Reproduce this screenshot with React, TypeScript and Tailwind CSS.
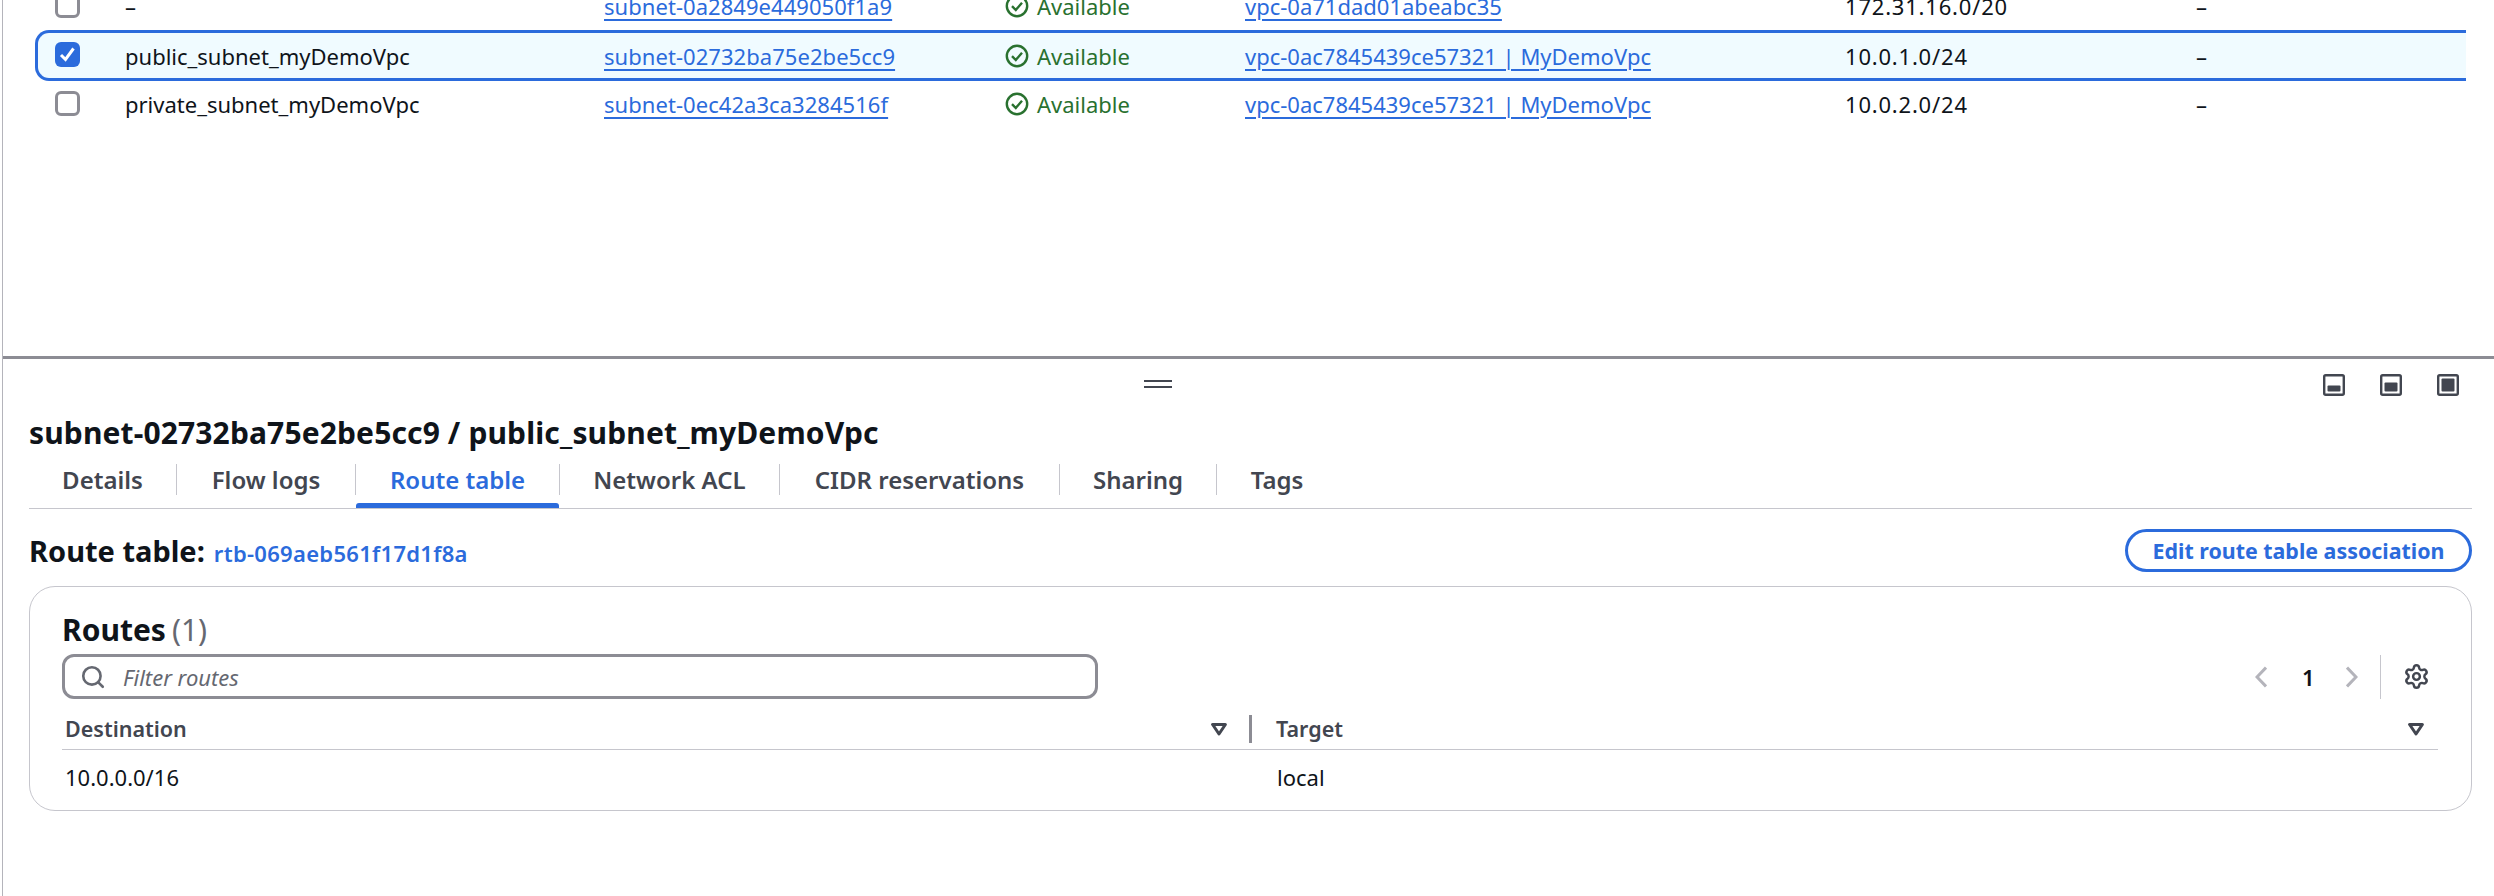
import type { ReactNode } from "react";
import { Search, Settings } from "lucide-react";

function Checkbox({ checked }: { checked?: boolean }) {
  if (checked) {
    return (
      <span className="-mt-[3px] flex h-[25px] w-[25px] shrink-0 items-center justify-center rounded-[6px] bg-[#2b6bdc]">
        <svg width="25" height="25" viewBox="0 0 25 25" fill="none">
          <path d="M6 13 L10.5 17.5 L18.5 6.5" stroke="#fff" strokeWidth="3" />
        </svg>
      </span>
    );
  }
  return <span className="-mt-[1px] block h-[25px] w-[25px] shrink-0 rounded-[6px] border-[3px] border-[#8c8c94] bg-white" />;
}

function Available() {
  return (
    <span className="flex items-center gap-[8px] text-[#29712f]">
      <svg width="24" height="24" viewBox="0 0 24 24" fill="none">
        <circle cx="12" cy="12" r="10.2" stroke="#29712f" strokeWidth="2.4" />
        <path d="M7 12.2 L10.8 16 L17 8.8" stroke="#29712f" strokeWidth="2.4" />
      </svg>
      Available
    </span>
  );
}

function Anchor({ children }: { children: ReactNode }) {
  return <span className="text-[#2b6bdc] underline decoration-2 underline-offset-[4px]">{children}</span>;
}

function Row({ name, subnet, vpc, cidr, checked, h }: { name: string; subnet: string; vpc: string; cidr: string; checked?: boolean; h?: string }) {
  return (
    <div
      className={`grid grid-cols-[70px_479px_401px_240px_600px_351px_1fr] items-center pl-[17px] ${
        checked
          ? "h-[51px] rounded-l-[14px] border-y-[3px] border-l-[3px] border-[#2b6bdc] bg-[#f0fbff]"
          : `${h} border-l-[3px] border-transparent`
      }`}
    >
      <Checkbox checked={checked} />
      <span className="text-[#0f141a]">{name}</span>
      <span className="tracking-[0.05px]"><Anchor>{subnet}</Anchor></span>
      <Available />
      <span><Anchor>{vpc}</Anchor></span>
      <span className="tracking-[0.8px] text-[#0f141a]">{cidr}</span>
      <span className="text-[#0f141a]">–</span>
    </div>
  );
}

function TabItem({ label, active, last, w }: { label: string; active?: boolean; last?: boolean; w: string }) {
  return (
    <div className={`relative flex h-[31px] items-center justify-center ${w} ${last ? "" : "border-r border-[#c6c6cd]"}`}>
      <span className={active ? "text-[#2b6bdc]" : "text-[#424650]"}>{label}</span>
      {active && <span className="absolute bottom-[-13px] left-0 right-0 h-[5px] rounded-t-[3px] bg-[#2b6bdc]" />}
    </div>
  );
}

function PanelIcon({ h }: { h: number }) {
  return (
    <svg width="22" height="22" viewBox="0 0 22 22">
      <rect x="1.2" y="1.2" width="19.6" height="19.6" rx="1.5" fill="#fff" stroke="#424650" strokeWidth="2.4" />
      <rect x="4.5" y={17.5 - h} width="13" height={h} rx="1" fill="#424650" />
    </svg>
  );
}

function SortIcon() {
  return (
    <svg width="16" height="13" viewBox="0 0 16 13" fill="none">
      <path d="M1.6 1.5 H14.4 L8 11 Z" stroke="#424650" strokeWidth="3" strokeLinejoin="round" />
    </svg>
  );
}

function Chevron({ dir }: { dir: "l" | "r" }) {
  return (
    <svg width="12" height="22" viewBox="0 0 12 22" fill="none">
      <path d={dir === "l" ? "M11 1.5 L2 11 L11 20.5" : "M1 1.5 L10 11 L1 20.5"} stroke="#b4b4bb" strokeWidth="3" />
    </svg>
  );
}

export default function App() {
  return (
    <div className="h-[896px] w-[2494px] overflow-hidden bg-white font-['Noto_Sans','Open_Sans',sans-serif] text-[22px] leading-[28px]">
      <div className="ml-[2px] h-full border-l border-[#b4b4bb]">
        {/* Upper table */}
        <div className="h-[359px] overflow-hidden border-b-[3px] border-[#8c8c94]">
          <div className="-mt-[19px] ml-[32px] w-[2431px]">
            <Row h="h-[49px]" name="–" subnet="subnet-0a2849e449050f1a9" vpc="vpc-0a71dad01abeabc35" cidr="172.31.16.0/20" />
            <Row checked name="public_subnet_myDemoVpc" subnet="subnet-02732ba75e2be5cc9" vpc="vpc-0ac7845439ce57321 | MyDemoVpc" cidr="10.0.1.0/24" />
            <Row h="h-[45px]" name="private_subnet_myDemoVpc" subnet="subnet-0ec42a3ca3284516f" vpc="vpc-0ac7845439ce57321 | MyDemoVpc" cidr="10.0.2.0/24" />
          </div>
        </div>

        {/* Split panel */}
        <div className="pl-[26px] pr-[22px]">
          {/* Handle and position buttons */}
          <div className="mr-[13px] flex h-[37px] items-start pt-[15px]">
            <div className="ml-[1115px] mt-[6px] flex w-[28px] flex-col gap-[4px]">
              <span className="block h-[2px] bg-[#424650]" />
              <span className="block h-[2px] bg-[#424650]" />
            </div>
            <div className="ml-auto flex gap-[35px]">
              <PanelIcon h={6} />
              <PanelIcon h={9} />
              <PanelIcon h={13} />
            </div>
          </div>

          <h2 className="mt-[17px] text-[30px] font-bold leading-[40px] tracking-[0.13px] text-[#0f141a]">
            subnet-02732ba75e2be5cc9 / public_subnet_myDemoVpc
          </h2>

          {/* Tabs */}
          <div className="mt-[11px] flex border-b border-[#c6c6cd] pb-[13px] text-[24px] font-semibold">
            <TabItem label="Details" w="w-[148px]" />
            <TabItem label="Flow logs" w="w-[179px]" />
            <TabItem label="Route table" active w="w-[204px]" />
            <TabItem label="Network ACL" w="w-[220px]" />
            <TabItem label="CIDR reservations" w="w-[280px]" />
            <TabItem label="Sharing" w="w-[157px]" />
            <TabItem label="Tags" last w="w-[120px]" />
          </div>

          {/* Route table line */}
          <div className="mt-[20px] flex h-[43px] items-center justify-between">
            <div className="mt-[3px] flex items-baseline gap-[9px]">
              <span className="text-[29px] font-bold text-[#0f141a]">Route table:</span>
              <span className="font-semibold tracking-[0.3px] text-[#2b6bdc]">rtb-069aeb561f17d1f8a</span>
            </div>
            <button className="flex h-[43px] w-[347px] items-center justify-center rounded-full border-[3px] border-[#2b6bdc] text-[21.4px] font-bold text-[#2b6bdc]">
              Edit route table association
            </button>
          </div>

          {/* Routes card */}
          <div className="mt-[14px] h-[225px] rounded-[26px] border border-[#c6c6cd] pl-[32px] pr-[33px] pt-[23px]">
            <div className="flex gap-[6px] text-[30px] font-bold leading-[40px] text-[#0f141a]">
              Routes <span className="font-normal text-[#656871]">(1)</span>
            </div>
            <div className="mt-[4px] flex h-[45px] items-center justify-between">
              <div className="flex h-[45px] w-[1036px] items-center gap-[17px] rounded-[12px] border-[3px] border-[#8c8c94] pl-[15px]">
                <Search size={26} color="#656871" strokeWidth={2.4} />
                <span className="italic text-[#656871]">Filter routes</span>
              </div>
              <div className="flex items-center pr-[8px]">
                <Chevron dir="l" />
                <span className="ml-[35px] w-[44px] font-semibold text-[#0f141a]">1</span>
                <Chevron dir="r" />
                <span className="ml-[22px] h-[44px] w-px bg-[#c6c6cd]" />
                <Settings size={27} color="#424650" strokeWidth={2.2} className="ml-[22px]" />
              </div>
            </div>
            <div className="grid h-[51px] grid-cols-[1187px_3px_1fr] border-b border-[#c6c6cd] pt-[16px]">
              <div className="flex h-[28px] items-center justify-between pl-[3px] pr-[22px] text-[21.5px] font-semibold text-[#424650]">
                Destination
                <SortIcon />
              </div>
              <span className="h-[28px] bg-[#8c8c94]" />
              <div className="flex h-[28px] items-center justify-between pl-[24px] pr-[14px] text-[21.5px] font-semibold text-[#424650]">
                Target
                <SortIcon />
              </div>
            </div>
            <div className="grid h-[52px] grid-cols-[1190px_1fr] items-center pt-[2px] text-[#0f141a]">
              <span className="pl-[3px]">10.0.0.0/16</span>
              <span className="pl-[25px]">local</span>
            </div>
          </div>
        </div>
      </div>
    </div>
  );
}
